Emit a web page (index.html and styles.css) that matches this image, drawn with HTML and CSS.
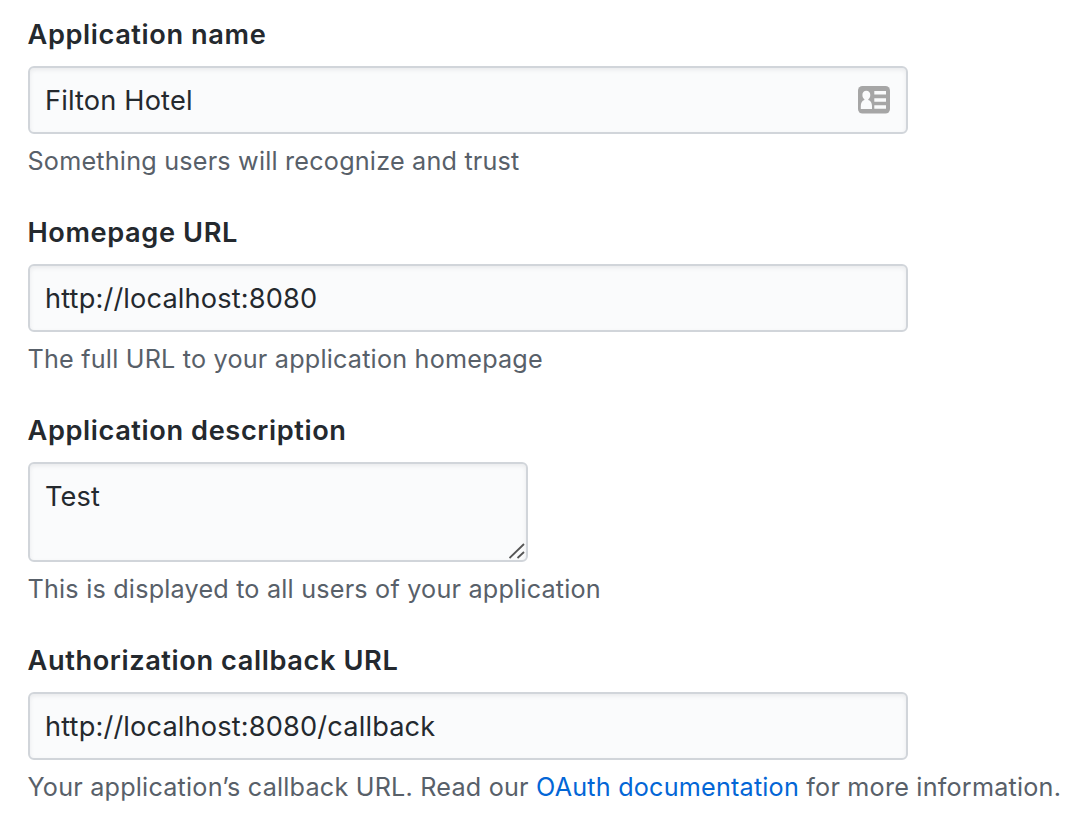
FILE: index.html
```html
<!DOCTYPE html>
<html lang="en">
<head>
<meta charset="utf-8">
<title>OAuth application</title>
<link rel="stylesheet" href="styles.css">
</head>
<body>
<form class="form">
  <div class="group">
    <label class="label">Application name</label>
    <div class="field"><span>Filton Hotel</span>
      <svg class="card-icon" width="32" height="28" viewBox="0 0 32 28"><rect width="32" height="27.600" rx="4.500" fill="#a6a6a6"/><path d="M8.300 4.800c2.500 0 4 1.800 4 4.200 0 2-.8 3.400-2 4.200v.8c2.500.8 3.700 3 3.700 6v3H2.800v-3c0-3 1.100-5.200 3.600-6v-.8c-1.200-.8-2-2.200-2-4.200 0-2.400 1.400-4.200 3.900-4.200zM16.300 5H28v3.500H16.300zM16.300 12.200H28v3.500H16.300zM16.300 19.300H28v3.500H16.300z" fill="#fafbfc"/></svg>
    </div>
    <p class="note">Something users will recognize and trust</p>
  </div>
  <div class="group">
    <label class="label">Homepage URL</label>
    <div class="field"><span>http://localhost:8080</span></div>
    <p class="note">The full URL to your application homepage</p>
  </div>
  <div class="group">
    <label class="label">Application description</label>
    <div class="field area"><span>Test</span>
      <svg class="grip" width="16" height="16" viewBox="0 0 16 16"><path d="M.5 15 15 1M8.500 15l6.500-6" stroke="#555" stroke-width="1.800" fill="none"/></svg>
    </div>
    <p class="note">This is displayed to all users of your application</p>
  </div>
  <div class="group">
    <label class="label">Authorization callback URL</label>
    <div class="field"><span>http://localhost:8080/callback</span></div>
    <p class="note">Your application’s callback URL. Read our <a class="link">OAuth documentation</a> for more information.</p>
  </div>
</form>
</body>
</html>
```
FILE: styles.css
```css
* { box-sizing: border-box; }
body { margin: 0; background: #fff; color: #24292e; font-family: Inter, "Liberation Sans", sans-serif; overflow: hidden; }
.form { display: flex; flex-direction: column; gap: 34px; padding: 14px 0 0 27.500px; }
.label { display: block; height: 42px; margin-bottom: 10px; font-size: 27.200px; font-weight: 600; line-height: 42px; letter-spacing: .6px; white-space: nowrap; }
.field { position: relative; display: flex; width: 880px; height: 68px; margin-left: .5px; padding: 12px 15px; border: 2px solid #d1d5da; border-radius: 6px; background: #fafbfc; box-shadow: inset 0 2px 4px rgba(27,31,35,.075); font-size: 27.200px; line-height: 42px; letter-spacing: .15px; white-space: nowrap; }
.area { width: 500px; height: 100px; }
.note { height: 34px; margin: 10px 0 0; color: #586069; font-size: 25.200px; line-height: 34px; letter-spacing: .2px; white-space: nowrap; }
.link { color: #0366d6; }
.card-icon { position: absolute; right: 16px; top: 18px; }
.grip { position: absolute; right: 1px; bottom: 1px; }
```
